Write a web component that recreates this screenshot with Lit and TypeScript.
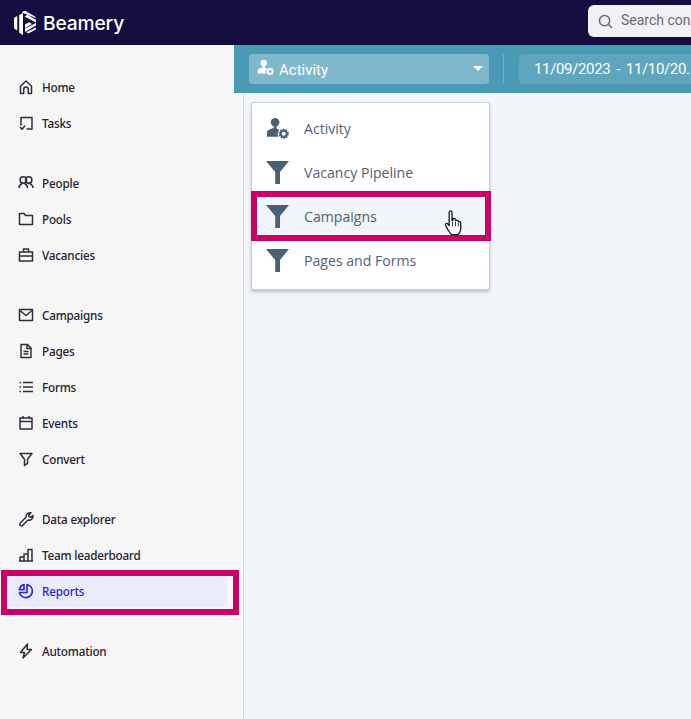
import { LitElement, html, css, svg } from "lit";
import { customElement } from "lit/decorators.js";

const I: Record<string, unknown> = {
  home: svg`<path d="M3.500 15.500V8.200L9 3l5.500 5.200v7.300h-3.200v-4.200a2.300 2.300 0 0 0-4.600 0v4.200z"/>`,
  tasks: svg`<path d="M4 11.500V3.500h11v11.500H9.500"/><path d="M3 13l2 2.200 3-3.400"/>`,
  people: svg`<circle cx="6.300" cy="6" r="3.200"/><circle cx="11.700" cy="6" r="3.200"/><path d="M2 14c0-2.300 1.500-3.800 3.200-4.500M7.500 9.500c1.800.8 3 2.500 3 4.500M11 9.600c2.500-.4 5 1.600 5 4.400"/>`,
  pools: svg`<path d="M2.500 14.500V3.500h4.500l1.500 2h7v9z"/>`,
  vacancies: svg`<rect x="2.500" y="6" width="13" height="9"/><path d="M6.500 6V3h5v3M2.500 10h13"/>`,
  campaigns: svg`<rect x="2.500" y="3.500" width="13" height="11"/><path d="M3 4.500l6 5 6-5"/>`,
  pages: svg`<path d="M4 2.500h6.500l3.500 3.500v9.500H4z"/><path d="M10 3v3.500h4M6.500 9.500h5M6.500 12h5"/>`,
  forms: svg`<path d="M6 4.500h10M6 9h10M6 13.500h10M2.500 4.500h1.500M2.500 9h1.500M2.500 13.500h1.500"/>`,
  events: svg`<rect x="3" y="4" width="12" height="11"/><path d="M3 7.500h12M6 2v2.500M12 2v2.500"/>`,
  convert: svg`<path d="M3 3.500h12l-4.500 5.800v4l-3 2.200V9.300z"/>`,
  data: svg`<path d="M3 13.300l6-6a4 4 0 0 1 5-4.500l-2.300 2.300.5 1.700 1.700.5L16 5.500a4 4 0 0 1-5 4.500l-5.500 5.500a1.700 1.700 0 0 1-2.500-2.200z"/>`,
  team: svg`<path d="M2 15h14M3 15v-4h4v4M7 15V8h4v7M11 15V3.500h4V15"/>`,
  reports: svg`<path d="M10 2.700a6.500 6.500 0 1 1-7.500 7.800h7.500z"/><path d="M7 2.600a6 6 0 0 0-4.500 5.100H7z"/>`,
  automation: svg`<path d="M10.500 2L3.500 10.500h4L6 16l8.500-8.500h-4.300z"/>`,
};

const groups = [
  [["home", "Home"], ["tasks", "Tasks"]],
  [["people", "People"], ["pools", "Pools"], ["vacancies", "Vacancies"]],
  [["campaigns", "Campaigns"], ["pages", "Pages"], ["forms", "Forms"], ["events", "Events"], ["convert", "Convert"]],
  [["data", "Data explorer"], ["team", "Team leaderboard"], ["reports", "Reports"]],
  [["automation", "Automation"]],
];

const userGear = (c: string, hole: string) => svg`
  <svg class="ug" viewBox="0 0 24 24" fill="${c}">
    <circle cx="9.500" cy="5.500" r="4.500"/>
    <path d="M8 9.500h3v2.500l3 1.500a6 6 0 0 0-1 7H1v-4.500c0-2 2-3 7-4.500z"/>
    <circle cx="18.500" cy="17.500" r="3.300" fill="none" stroke="${c}" stroke-width="2.400"/>
    <circle cx="18.500" cy="17.500" r="4.700" fill="none" stroke="${c}" stroke-width="1.500" stroke-dasharray="1.500 1.450"/>
    <circle cx="18.500" cy="17.500" r="1.100" fill="${hole}"/>
  </svg>`;

const funnel = svg`<svg class="fn" viewBox="0 0 24 24" fill="#4a6076"><path d="M0 0h24L14.600 11.500V24h-5V11.500z"/></svg>`;

@customElement("app-root")
export class AppRoot extends LitElement {
  static styles = css`
    :host { display: block; width: 691px; height: 719px; overflow: hidden; position: relative;
      font-family: "Open Sans", sans-serif; background: #f2f5fa; }
    .top { height: 45px; background: #150c40; display: flex; align-items: center; padding-left: 14px; box-sizing: border-box; position: relative; }
    .logo { width: 22px; height: 24px; display: block; }
    .brand { font-family: "Inter", sans-serif; font-size: 19.300px; font-weight: 500; color: #fff; margin-left: 7px; letter-spacing: -0.200px; line-height: 24px; }
    .search { margin-left: auto; width: 103px; height: 32px; box-sizing: border-box; background: #f1f1f5; border-radius: 6px 0 0 6px;
      display: flex; align-items: center; padding-left: 10px; gap: 8px; color: #6b6878; font: 14px "Roboto", sans-serif; white-space: nowrap; overflow: hidden; margin-top: -3px; }
    .search span { margin-top: -2px; }
    .search svg { width: 15px; height: 15px; flex: none; fill: none; stroke: #6b6878; stroke-width: 1.600; }
    .body { display: grid; grid-template-columns: 234px 10px 1fr; grid-template-rows: 48px 626px; }
    .side { grid-column: 1 / 3; grid-row: 1 / 3; background: #f6f6f7; border-right: 1px solid #cfd6e6; padding: 26px 0 0 7px; box-sizing: border-box;
      display: flex; flex-direction: column; gap: 28px; }
    .group { display: flex; flex-direction: column; gap: 4px; }
    .item { width: 219px; height: 32px; box-sizing: border-box; display: flex; align-items: center; gap: 7px; padding-left: 10px; border-radius: 4px;
      font: 500 11.700px "Noto Sans", "Open Sans", sans-serif; letter-spacing: -0.200px; color: #23212e; }
    .item svg { width: 18px; height: 18px; flex: none; fill: none; stroke: #2f2d38; stroke-width: 1.500; stroke-linejoin: round; }
    .item.on { background: #e9ebfb; color: #2c27c8; }
    .item.on svg { stroke: #2c27c8; stroke-width: 1.700; }
    .bar { grid-column: 2 / 4; grid-row: 1; background: #4a9ab5; z-index: 1; display: flex; align-items: center; padding: 9px 0 9px 15px; box-sizing: border-box; height: 48px; }
    .select { width: 240px; height: 30px; background: #80b8cb; border-radius: 4px; color: #fff; display: flex; align-items: center; padding: 1px 6px 0 8px; box-sizing: border-box;
      font: 15px "Roboto", sans-serif; }
    .select .ug { width: 17px; height: 17px; margin-right: 5px; margin-top: -4px; }
    .caret { margin-left: auto; width: 0; height: 0; border-left: 5px solid transparent; border-right: 5px solid transparent; border-top: 5px solid #fff; margin-top: -2px; }
    .sep { width: 1px; height: 30px; background: #6fb0c6; margin: 0 15px 0 14px; }
    .date { flex: 1; min-width: 0; height: 30px; background: #5ea5bd; border-radius: 4px 0 0 4px; color: #fff; font: 15px "Roboto", sans-serif; letter-spacing: -0.350px; word-spacing: 2.500px; line-height: 30px; padding-left: 15px; white-space: nowrap; overflow: hidden; }
    .menu { grid-column: 3; grid-row: 2; align-self: start; width: 239px; margin: 9px 0 0 7px; box-sizing: border-box; background: #fff; border: 1px solid #c3d2de; border-radius: 3px;
      box-shadow: 0 2px 3px rgba(60, 80, 100, 0.300); padding: 3px 0 7px; }
    .row { height: 44px; display: flex; align-items: center; padding-left: 14px; gap: 15px; font: 14.100px "Open Sans", sans-serif; color: #4f6378; position: relative; box-sizing: border-box; }
    .row.hot { background: #f2f5fa; }
    .row .ug, .row .fn { width: 23px; height: 23px; flex: none; }
    .ring { position: absolute; box-sizing: border-box; border: 6px solid #cc0066; pointer-events: none; z-index: 5; }
    .r1 { left: 1px; top: 570px; width: 238px; height: 45px; }
    .r2 { left: 251px; top: 191px; width: 240px; height: 50px; }
    .cursor { position: absolute; left: 444px; top: 210px; width: 19px; height: 26px; z-index: 6; }
  `;

  render() {
    return html`
      <div class="top">
        <svg class="logo" viewBox="0 0 22 24" fill="#fff">
          <path d="M0 6.800L3.300 5v14.500L1.200 18.300A2.400 2.400 0 0 1 0 16.200z"/>
          <path d="M5.200 4L9 2v22l-3.800-2.200z"/>
          <path d="M7.500 1.500L10 0a2 2 0 0 1 1.500 0l9.500 5.500a2 2 0 0 1 1 1.500z"/>
          <path d="M10.500 5.500l3-1.700L22 8.700v2.800z"/>
          <path d="M11 13.500l4-2.200 3 1.700-7 4z" />
          <path d="M22 12v2.500L11 21v-3.500z"/>
          <path d="M22 16.500v1.800l-7.500 4.300-2.300-1.300z"/>
        </svg>
        <span class="brand">Beamery</span>
        <div class="search">
          <svg viewBox="0 0 16 16"><circle cx="7" cy="7" r="5.500"/><path d="M11 11l4 4"/></svg>
          <span>Search con</span>
        </div>
      </div>
      <div class="body">
        <nav class="side">
          ${groups.map((g) => html`<div class="group">
            ${g.map(([k, t]) => html`<div class="item ${k === "reports" ? "on" : ""}">
              <svg viewBox="0 0 18 18">${I[k]}</svg><span>${t}</span>
            </div>`)}
          </div>`)}
        </nav>
        <div class="bar">
          <div class="select">${userGear("#fff", "#80b8cb")}<span>Activity</span><i class="caret"></i></div>
          <div class="sep"></div>
          <div class="date">11/09/2023 - 11/10/20..</div>
        </div>
        <div class="menu">
          <div class="row">${userGear("#4a6076", "#fff")}<span>Activity</span></div>
          <div class="row">${funnel}<span>Vacancy Pipeline</span></div>
          <div class="row hot">${funnel}<span>Campaigns</span></div>
          <div class="row">${funnel}<span>Pages and Forms</span></div>
        </div>
      </div>
      <div class="ring r1"></div>
      <div class="ring r2"></div>
      <svg class="cursor" viewBox="0 0 18 27">
        <path d="M4.500 2.500a1.500 1.500 0 0 1 3 0v8.500l1-.5v-1.500c1.500-.8 2.500 0 2.500 1l.5 1c1-.8 2.300-.2 2.500.8l.5.5c1-.5 2 0 2 1.200v6c0 3-2 5.500-3.500 6H7c-1.500-1-2-2.500-3.500-4.500L.8 16c-.8-1.500 1-2.800 2.200-1.500l1.500 1.800z" fill="#fff" stroke="#111" stroke-width="1.300" stroke-linejoin="round"/>
        <path d="M8 12v5M11 12v5M14 13v4" stroke="#111" stroke-width=".9" fill="none"/>
      </svg>
    `;
  }
}
